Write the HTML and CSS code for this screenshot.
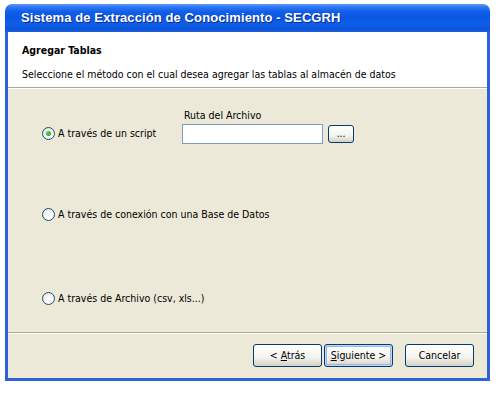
FILE: index.html
```html
<!DOCTYPE html>
<html lang="es">
  <head>
    <meta charset="UTF-8" />
    <title>Agregar Tablas</title>
    <link rel="stylesheet" href="styles.css">
  </head>
  <body>
    <div class="window">
      <div class="titlebar">Sistema de Extracción de Conocimiento - SECGRH</div>
      <div class="frame">
        <div class="header">
          <h1>Agregar Tablas</h1>
          <p>Seleccione el método con el cual desea agregar las tablas al almacén de datos</p>
        </div>

        <div class="options">
          <div class="option option-script">
            <label class="radio-label"><span class="radio checked"></span>A través de un script</label>
            <div class="field">
              <span class="field-label">Ruta del Archivo</span>
              <div class="field-row">
                <span class="input"></span>
                <button class="btn btn-small">...</button>
              </div>
            </div>
          </div>
          <div class="option option-db">
            <label class="radio-label"><span class="radio"></span>A través de conexión con una Base de Datos</label>
          </div>
          <div class="option option-file">
            <label class="radio-label"><span class="radio"></span>A través de Archivo (csv, xls...)</label>
          </div>
        </div>

        <div class="footer">
          <button class="btn">&lt; <u>A</u>trás</button>
          <button class="btn btn-default"><u>S</u>iguiente &gt;</button>
          <button class="btn btn-cancel">Cancelar</button>
        </div>
      </div>
    </div>
  </body>
</html>
```

FILE: styles.css
```css
body {
  margin: 0;
  background: #ffffff;
  font-family: "DejaVu Sans Condensed", "DejaVu Sans", sans-serif;
  font-size: 10.5px;
  color: #000000;
}

.window {
  margin: 4px 0 0 5px;
  width: 485px;
}

.titlebar {
  height: 28px;
  box-sizing: border-box;
  padding: 6px 0 0 16px;
  border-radius: 7px 7px 0 0;
  background: linear-gradient(
    to bottom,
    #5c9bfb 0px,
    #2f77f3 3px,
    #0f5de8 8px,
    #0a57e4 14px,
    #0f5fe9 20px,
    #0b53dc 25px,
    #1e5fd6 28px
  );
  color: #ffffff;
  font-family: "Liberation Sans", Arial, sans-serif;
  font-weight: bold;
  font-size: 13px;
  letter-spacing: 0.1px;
  text-shadow: 1px 1px 0 #0a2a88;
}

.frame {
  border: 3px solid #2d62dc;
  border-top: none;
  background: #ece9d8;
  height: 349px;
  box-sizing: border-box;
  display: flex;
  flex-direction: column;
}

.header {
  background: #ffffff;
  height: 56px;
  box-sizing: border-box;
  padding: 12px 14px 0;
  border-bottom: 1px solid #aca899;
  box-shadow: 0 1px 0 #ffffff;
}

.header h1 {
  margin: 0;
  font-size: 10.5px;
  font-weight: bold;
}

.header p {
  margin: 12px 0 0;
}

.options {
  flex: 1;
  padding: 21px 0 0 34px;
  border-bottom: 1px solid #aca899;
  box-shadow: 0 1px 0 #ffffff;
}

.option {
  display: flex;
  align-items: flex-end;
  white-space: nowrap;
}

.option-db {
  margin-top: 60px;
}

.option-file {
  margin-top: 64px;
}

.radio-label {
  display: flex;
  align-items: center;
  gap: 3px;
  height: 20px;
}

.option-script .radio-label {
  width: 140px;
  margin-bottom: 1px;
}

.radio {
  flex: none;
  width: 11px;
  height: 11px;
  border: 1px solid #1c5180;
  border-radius: 50%;
  background: radial-gradient(circle at 60% 65%, #ffffff 20%, #dcdcd5 100%);
  display: flex;
  align-items: center;
  justify-content: center;
}

.radio.checked::after {
  content: "";
  width: 5px;
  height: 5px;
  border-radius: 50%;
  background: radial-gradient(circle at 35% 35%, #55d451, #1e9c1b);
}

.field {
  display: flex;
  flex-direction: column;
}

.field-label {
  margin: 0 0 3px 2px;
}

.field-row {
  display: flex;
  align-items: center;
  gap: 5px;
}

.input {
  width: 139px;
  height: 18px;
  border: 1px solid #7f9db9;
  background: #ffffff;
}

.btn {
  font-family: inherit;
  font-size: 10.5px;
  color: #000000;
  height: 23px;
  border: 1px solid #003c74;
  border-radius: 3px;
  background: linear-gradient(to bottom, #ffffff 0%, #f4f3ee 60%, #d6d0c5 100%);
  padding: 0;
}

.btn-small {
  width: 26px;
  height: 18px;
  font-size: 10px;
  line-height: 10px;
}

.footer {
  height: 45px;
  box-sizing: border-box;
  display: flex;
  align-items: center;
  padding: 0 0 1px 245px;
}

.footer .btn {
  width: 69px;
}

.btn-default {
  margin-left: 2px;
  box-shadow: inset 0 0 0 1px #c4d4f7, inset 0 0 0 2px #98b8ea;
}

.btn-cancel {
  margin-left: 12px;
}
```
